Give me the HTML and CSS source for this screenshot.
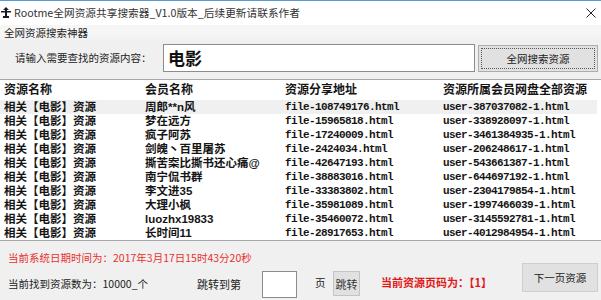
FILE: index.html
```html
<!DOCTYPE html>
<html lang="zh-CN">
<head>
<meta charset="utf-8">
<title>Rootme全网资源共享搜索器</title>
<link rel="stylesheet" href="styles.css">
</head>
<body>
<div class="window">
  <div class="titlebar">
    <svg class="app-icon" width="10" height="11" viewBox="0 0 10 11">
      <path d="M5 0 L8 3 H6 V4 H10 V5.5 H6 V9 H8 V11 H2 V9 H4 V5.5 H0 V4 H4 V3 H2 Z" fill="#1a1a1a"/>
    </svg>
    <span class="title">Rootme全网资源共享搜索器_V1.0版本_后续更新请联系作者</span>
    <svg class="close" width="10" height="10" viewBox="0 0 10 10">
      <path d="M0.5 0.5 L9.5 9.5 M9.5 0.5 L0.5 9.5" stroke="#222" stroke-width="1"/>
    </svg>
  </div>
  <div class="group-label">全网资源搜索神器</div>
  <div class="search-row">
    <div class="search-label">请输入需要查找的资源内容：</div>
    <div class="search-input">电影</div>
    <div class="btn btn-search"><span class="focus-ring">全网搜索资源</span></div>
  </div>
  <div class="grid">
    <div class="row head">
      <div class="cell">资源名称</div>
      <div class="cell">会员名称</div>
      <div class="cell">资源分享地址</div>
      <div class="cell">资源所属会员网盘全部资源</div>
    </div>
    <div class="row selected">
      <div class="cell">相关【电影】资源</div>
      <div class="cell">周郎**n风</div>
      <div class="cell mono">file-108749176.html</div>
      <div class="cell mono">user-387037082-1.html</div>
    </div>
    <div class="row">
      <div class="cell">相关【电影】资源</div>
      <div class="cell">梦在远方</div>
      <div class="cell mono">file-15965818.html</div>
      <div class="cell mono">user-338928097-1.html</div>
    </div>
    <div class="row">
      <div class="cell">相关【电影】资源</div>
      <div class="cell">疯子阿苏</div>
      <div class="cell mono">file-17240009.html</div>
      <div class="cell mono">user-3461384935-1.html</div>
    </div>
    <div class="row">
      <div class="cell">相关【电影】资源</div>
      <div class="cell">剑魄丶百里屠苏</div>
      <div class="cell mono">file-2424034.html</div>
      <div class="cell mono">user-206248617-1.html</div>
    </div>
    <div class="row">
      <div class="cell">相关【电影】资源</div>
      <div class="cell">撕苦案比撕书还心痛@</div>
      <div class="cell mono">file-42647193.html</div>
      <div class="cell mono">user-543661387-1.html</div>
    </div>
    <div class="row">
      <div class="cell">相关【电影】资源</div>
      <div class="cell">南宁侃书群</div>
      <div class="cell mono">file-38883016.html</div>
      <div class="cell mono">user-644697192-1.html</div>
    </div>
    <div class="row">
      <div class="cell">相关【电影】资源</div>
      <div class="cell">李文进35</div>
      <div class="cell mono">file-33383802.html</div>
      <div class="cell mono">user-2304179854-1.html</div>
    </div>
    <div class="row">
      <div class="cell">相关【电影】资源</div>
      <div class="cell">大理小枫</div>
      <div class="cell mono">file-35981089.html</div>
      <div class="cell mono">user-1997466039-1.html</div>
    </div>
    <div class="row">
      <div class="cell">相关【电影】资源</div>
      <div class="cell">luozhx19833</div>
      <div class="cell mono">file-35460072.html</div>
      <div class="cell mono">user-3145592781-1.html</div>
    </div>
    <div class="row">
      <div class="cell">相关【电影】资源</div>
      <div class="cell">长时间11</div>
      <div class="cell mono">file-28917653.html</div>
      <div class="cell mono">user-4012984954-1.html</div>
    </div>
  </div>
  <div class="datetime">当前系统日期时间为：2017年3月17日15时43分20秒</div>
  <div class="bottom">
    <div class="count">当前找到资源数为：10000_个</div>
    <div class="jump-label">跳转到第</div>
    <div class="page-input"></div>
    <div class="page-unit">页</div>
    <div class="btn btn-jump">跳转</div>
    <div class="page-no">当前资源页码为：【1】</div>
    <div class="btn btn-next">下一页资源</div>
  </div>
</div>
</body>
</html>
```

FILE: styles.css
```css
* {
  box-sizing: border-box;
}

html, body {
  margin: 0;
  padding: 0;
}

body {
  width: 601px;
  height: 300px;
  overflow: hidden;
  background: #f0f0f0;
  font-family: "Noto Sans CJK SC", "Noto Sans", sans-serif;
  color: #1a1a1a;
}

.window {
  width: 601px;
  height: 300px;
  display: flex;
  flex-direction: column;
}

.titlebar {
  height: 25px;
  flex: none;
  display: flex;
  align-items: center;
  background: #ffffff;
  border-top: 1px solid #5b9bd5;
  padding: 0 5px 0 1px;
}

.app-icon {
  flex: none;
  margin-top: -1px;
}

.title {
  margin-left: 3px;
  font-size: 10.7px;
  line-height: 14px;
  color: #333333;
  white-space: nowrap;
}

.close {
  margin-left: auto;
  flex: none;
}

.group-label {
  height: 16px;
  flex: none;
  padding-left: 4px;
  font-size: 10.5px;
  line-height: 16px;
  color: #222222;
  background: linear-gradient(#f6f6f6 60%, #f0f0f0);
}

.search-row {
  display: flex;
  align-items: flex-start;
  padding: 3px 0 0 15px;
  height: 38px;
  flex: none;
}

.search-label {
  width: 148px;
  font-size: 10.5px;
  line-height: 28px;
  color: #222222;
  white-space: nowrap;
}

.search-input {
  width: 312px;
  height: 28px;
  background: #ffffff;
  border: 1px solid #8c8c8c;
  padding-left: 4px;
  font-size: 17px;
  font-weight: 700;
  line-height: 25px;
  color: #111111;
}

.btn {
  display: flex;
  align-items: center;
  justify-content: center;
  background: #e1e1e1;
  border: 1px solid #adadad;
  font-size: 10.5px;
  color: #222222;
  white-space: nowrap;
}

.btn-search {
  width: 120px;
  height: 27px;
  margin: 1px 0 0 3px;
  padding: 2px;
}

.focus-ring {
  flex: 1;
  align-self: stretch;
  display: flex;
  align-items: center;
  justify-content: center;
  border: 1px dotted #555555;
}

.grid {
  flex: none;
  height: 162px;
  background: #ffffff;
  border-top: 1px solid #a6a6a6;
  border-bottom: 1px solid #a6a6a6;
}

.row {
  display: grid;
  grid-template-columns: 141px 140px 158px 1fr;
  align-items: center;
  height: 14px;
  font-family: "Liberation Sans", "Noto Sans CJK SC", sans-serif;
  font-size: 11.5px;
  font-weight: 700;
  line-height: 14px;
  color: #151515;
}

.row.head {
  height: 20px;
  line-height: 20px;
  font-size: 12px;
}

.row.selected {
  background: #f0f0f0;
  margin-right: 4px;
}

.cell {
  padding-left: 4px;
  white-space: nowrap;
}

.cell.mono {
  font-family: "Liberation Mono", "DejaVu Sans Mono", monospace;
  font-size: 11px;
  letter-spacing: -0.6px;
  font-weight: 700;
}

.datetime {
  flex: none;
  margin-top: 10px;
  padding-left: 8px;
  height: 14px;
  font-size: 10.5px;
  line-height: 14px;
  color: #e8302e;
  white-space: nowrap;
}

.bottom {
  flex: none;
  display: flex;
  align-items: center;
  height: 34px;
  padding-left: 8px;
  font-size: 10.5px;
  color: #222222;
  white-space: nowrap;
}

.count {
  width: 189px;
  margin-top: 3px;
}

.jump-label {
  width: 65px;
  font-size: 11px;
  margin-top: 3px;
}

.page-input {
  width: 35px;
  height: 27px;
  background: #ffffff;
  border: 1px solid #8c8c8c;
  margin-top: 5px;
}

.page-unit {
  margin-left: 18px;
  width: 18px;
}

.btn-jump {
  width: 27px;
  height: 25px;
  margin-top: 3px;
  font-size: 11px;
  color: #333333;
  border-color: #c4c4c4;
}

.page-no {
  margin-left: 21px;
  font-size: 11px;
  font-weight: 700;
  color: #e01818;
}

.btn-next {
  margin-left: auto;
  margin-right: 3px;
  margin-bottom: 9px;
  width: 76px;
  height: 29px;
  border-color: #cfcfcf;
}
```
